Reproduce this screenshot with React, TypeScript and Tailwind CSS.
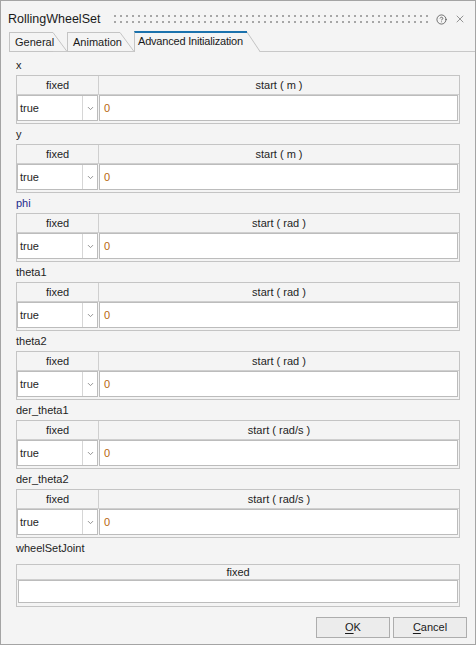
import { ChevronDown, CircleHelp, X } from 'lucide-react';

const fields = [
    { label: 'x', unit: 'm' },
    { label: 'y', unit: 'm' },
    { label: 'phi', unit: 'rad', blue: true },
    { label: 'theta1', unit: 'rad' },
    { label: 'theta2', unit: 'rad' },
    { label: 'der_theta1', unit: 'rad/s' },
    { label: 'der_theta2', unit: 'rad/s' },
];

export default function App() {
    return (
        <div
            className="flex h-[645px] w-[476px] flex-col border border-[#a4a4a4] bg-[#f4f4f4] text-[11px] text-[#1e1e1e]"
            style={{ fontFamily: '"Liberation Sans", Arial, sans-serif' }}
        >
            {/* title bar */}
            <div className="flex h-[30px] shrink-0 items-center pl-[7px] pr-[9px] pt-[6px]">
                <span className="text-[12.5px] leading-[15px] text-[#1a1a1a]">RollingWheelSet</span>
                <svg className="ml-[14px] mr-[7px] h-[8px] flex-1" preserveAspectRatio="none">
                    <defs>
                        <pattern id="grip" width="6" height="6" patternUnits="userSpaceOnUse">
                            <rect x="0" y="0" width="2" height="2" fill="#a6a6a6" />
                        </pattern>
                    </defs>
                    <rect x="0" y="0" width="100%" height="8" fill="url(#grip)" />
                </svg>
                <CircleHelp size={11} strokeWidth={1.6} className="text-[#444]" />
                <X size={12} strokeWidth={1.1} className="ml-[7px] text-[#444]" />
            </div>

            {/* tabs */}
            <div className="flex h-[21px] shrink-0 items-end pl-[8px]">
                <Tab label="General" width={44} />
                <Tab label="Animation" width={53} />
                <div className="flex h-[21px]">
                    <div className="w-[113px] whitespace-nowrap border-t-2 border-l border-t-[#1b72ad] border-l-[#c4c4c4] pl-[3px] pt-[2px] leading-[13px] tracking-[-0.2px] text-[#1a1a1a]">
                        Advanced Initialization
                    </div>
                    <svg width="13" height="21" className="shrink-0">
                        <line x1="0" y1="1" x2="13" y2="20.5" stroke="#c4c4c4" />
                        <line x1="12.5" y1="20.5" x2="13" y2="20.5" stroke="#c4c4c4" />
                    </svg>
                </div>
                <div className="h-[21px] flex-1 border-b border-[#c8c8c8]" />
            </div>

            {/* content */}
            <div className="flex flex-1 flex-col px-[15px] pt-[3px]">
                {fields.map((f) => (
                    <Field key={f.label} label={f.label} unit={f.unit} blue={f.blue} />
                ))}

                <div className="h-[20px] pt-[4px] leading-[13px]">wheelSetJoint</div>
                <div className="mt-[6px] flex h-[43px] flex-col border border-[#c4c4c4]">
                    <div className="flex h-[15px] items-center justify-center border-b border-[#cfcfcf] leading-[13px]">
                        fixed
                    </div>
                    <div className="mx-[1px] h-[23px] border border-[#bcbcbc] bg-white" />
                </div>

                <div className="-mr-[7px] mt-auto flex justify-end gap-[3px] pb-[6px]">
                    <Button>
                        <span className="underline underline-offset-[2px]">O</span>K
                    </Button>
                    <Button>
                        <span className="underline underline-offset-[2px]">C</span>ancel
                    </Button>
                </div>
            </div>
        </div>
    );
}

function Tab({ label, width }: { label: string; width: number }) {
    return (
        <div className="flex h-[20px]">
            <div
                className="border-l border-t border-b border-[#c4c4c4] pl-[5px] pt-[3px] leading-[13px] text-[#1a1a1a]"
                style={{ width }}
            >
                {label}
            </div>
            <svg width="14" height="20" className="shrink-0">
                <line x1="0" y1="0.5" x2="14" y2="19.5" stroke="#c4c4c4" />
                <line x1="0" y1="19.5" x2="15" y2="19.5" stroke="#c8c8c8" />
            </svg>
        </div>
    );
}

function Field({ label, unit, blue }: { label: string; unit: string; blue?: boolean }) {
    return (
        <div className="flex flex-col">
            <div className={`h-[20px] pt-[4px] leading-[13px] ${blue ? 'text-[#1f2b8c]' : ''}`}>{label}</div>
            <div className="flex h-[49px] flex-col border border-[#c4c4c4]">
                <div className="flex h-[19px] border-b border-[#cfcfcf] leading-[13px]">
                    <div className="flex w-[82px] items-center justify-center border-r border-[#cfcfcf]">fixed</div>
                    <div className="flex flex-1 items-center justify-center">start ( {unit} )</div>
                </div>
                <div className="flex h-[26px] gap-[1px] pr-[1px]">
                    <div className="flex w-[81px] items-center border border-[#bcbcbc] bg-white">
                        <span className="flex-1 pl-[2px]">true</span>
                        <span className="flex h-full w-[15px] items-center justify-center border-l border-[#d6d6d6]">
                            <ChevronDown size={9} strokeWidth={2.5} className="text-[#8c8c8c]" />
                        </span>
                    </div>
                    <div className="flex flex-1 items-center border border-[#bcbcbc] bg-white pl-[4px] text-[#b8650f]">0</div>
                </div>
            </div>
        </div>
    );
}

function Button({ children }: { children: React.ReactNode }) {
    return (
        <div className="flex h-[21px] w-[74px] items-center justify-center border border-[#adadad] bg-[#ececec] text-[#1a1a1a]">
            {children}
        </div>
    );
}
